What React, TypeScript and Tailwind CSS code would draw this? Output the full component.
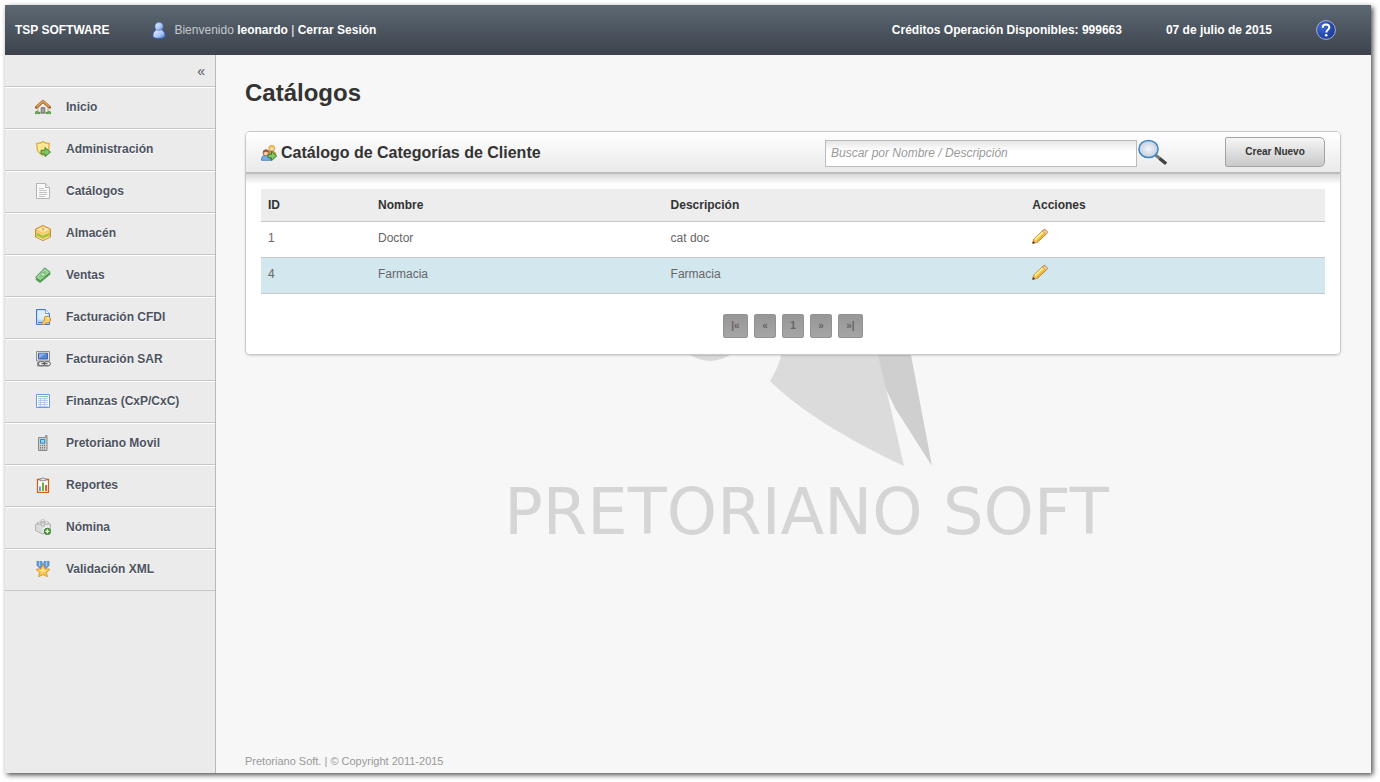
import { useState } from "react";
import type { ReactNode } from "react";
import { clsx } from "clsx";

function Icon({ children }: { children: ReactNode }) {
  return (
    <svg viewBox="0 0 16 16" className="w-4 h-4 shrink-0" aria-hidden="true">
      {children}
    </svg>
  );
}

const HomeIcon = () => (
  <Icon>
    <path d="M3 8.500 8 4l5 4.500V14H3z" fill="#f3efe8" stroke="#a89c8c" strokeWidth=".8" />
    <path d="M6.200 14V8.700h3.600V14z" fill="#a3a3a3" stroke="#5f5f5f" strokeWidth=".8" />
    <path d="M1.400 8.300 8 2.200l6.600 6.100" fill="none" stroke="#9a5a1e" strokeWidth="2.800" strokeLinejoin="round" strokeLinecap="round" />
    <path d="M1.600 8 8 2.100 14.400 8" fill="none" stroke="#dfa458" strokeWidth="1.600" strokeLinejoin="round" />
    <path d="M0 14.600c0-2 1.200-2.600 2.200-2.200 1 .2 1.600 1 2.800 1.200v1zM16 14.600c0-2-1.200-2.600-2.200-2.200-1 .2-1.600 1-2.800 1.200v1z" fill="#5fb04c" stroke="#34832a" strokeWidth=".6" />
  </Icon>
);

const ShieldIcon = () => (
  <Icon>
    <path d="M1.500 2.300C4 2.500 6 1.700 8 .5c2 1.200 4 2 6.500 1.800 0 2-.8 2.500-.5 4.500.2 4-3 6.200-6 7.700-3-1.500-6.200-3.700-6-7.700.3-2-.5-2.500-.5-4.500z" fill="#f5cf4d" stroke="#d39b26" strokeWidth=".9" />
    <path d="M3.300 3.900C5 3.900 6.700 3.200 8 2.500c1.300.7 3 1.400 4.700 1.400-.4 1-.5 2-.4 3.200.1 3-2.300 4.600-4.300 5.900-2-1.300-4.400-2.900-4.300-5.900.1-1.200 0-2.200-.4-3.200z" fill="#fbe38a" stroke="#fff7d0" strokeWidth=".9" />
    <path d="M6 9.300h4V6.600l5.500 4.500-5.500 4.500v-2.600H6z" fill="#84c464" stroke="#337a2c" strokeWidth=".9" />
  </Icon>
);

const PageIcon = () => (
  <Icon>
    <path d="M1.500.5h9l4 4v11h-13z" fill="#fafafa" stroke="#b5b5b5" />
    <path d="M10.500.5v4h4" fill="#e8e8e8" stroke="#b5b5b5" />
    <path d="M4 5.500h5M4 7.500h8M4 9.500h8M4 11.500h8M4 13.500h6" stroke="#c4c4c4" />
  </Icon>
);

const BoxIcon = () => (
  <Icon>
    <path d="M8 .5 15.500 4v8L8 15.600.5 12V4z" fill="#f1bf56" stroke="#c98422" strokeWidth=".9" />
    <path d="M8 1.500 14.500 4.500 8 7.700 1.500 4.500z" fill="#fde9b2" />
    <path d="M1.700 10.400 8 13.300l6.300-2.900V7.800L8 10.800 1.700 7.800z" fill="#9dcb3c" />
    <path d="M1.700 5.500 8 8.500l6.300-3v2L8 10.400 1.700 7.500z" fill="#f9d37c" />
    <path d="m5.500 2.600 2 .9v3l1.500-1V3" fill="#f0a83b" />
    <path d="M1.700 11.700 8 14.500l6.300-2.800" fill="none" stroke="#fae3a4" strokeWidth=".9" />
  </Icon>
);

const MoneyIcon = () => (
  <Icon>
    <path d="M.8 12.400 11.300 3.200l4 3.800L5 15.600z" fill="#62ad5f" stroke="#3d8a41" strokeWidth=".8" />
    <path d="M.6 10.300 9.800.8l5.400 4.500-9.800 8.400z" fill="#8bc985" stroke="#3d8a41" strokeWidth=".8" />
    <path d="m2.500 10.200 7.300-7.500 3.500 2.800-7.900 6.700z" fill="none" stroke="#c2e6b9" strokeWidth=".8" />
    <ellipse cx="8" cy="7.500" rx="2" ry="1.700" fill="#d5efcd" stroke="#5fa75c" strokeWidth=".8" />
  </Icon>
);

const PageKeyIcon = () => (
  <Icon>
    <path d="M1.500.5h9l4 4v11h-13z" fill="#b9d6f8" stroke="#3f7bc8" />
    <path d="M2.700 1.700h7.300l3.300 3.300v5.500H2.700z" fill="#dfedfd" />
    <path d="M10.500.5v4h4" fill="#fff" stroke="#6a9bdb" />
    <path d="M3 13.500h6" stroke="#3f7bc8" />
    <path d="M10 7.500h3.700L15.500 9v2.800L13.400 14h-2.200l-2.100 1.700H6.700l.2-2.300 3-2.500-.9-1.500z" fill="#f8ce62" stroke="#c08327" strokeWidth=".9" />
    <path d="M12.200 9.200h1.500" stroke="#fff3c4" strokeWidth="1.500" />
  </Icon>
);

const ComputerLinkIcon = () => (
  <Icon>
    <path d="M1.500.5h13V10h-13z" fill="#e2e2e2" stroke="#8e8e8e" />
    <path d="M3.500 2.300h9V8h-9z" fill="#5685d4" stroke="#3d62a5" />
    <path d="m4 7.500 7-5H4z" fill="#86adec" />
    <path d="M2.500 11.500h11V15h-11z" fill="#c5c5c5" stroke="#8b8b8b" />
    <rect x="3.500" y="10.700" width="6.200" height="4" rx="2" fill="#eee" stroke="#5b5b5b" />
    <rect x="9.200" y="10.700" width="6.200" height="4" rx="2" fill="#eee" stroke="#5b5b5b" />
    <path d="M6.500 12.700h6" stroke="#444" />
  </Icon>
);

const TableIcon = () => (
  <Icon>
    <path d="M1.500 1.500h13v13h-13z" fill="#fff" stroke="#6b9be0" />
    <path d="M3 3.500h10" stroke="#8cc78a" />
    <path d="M3 5.500h10v8H3z" fill="#eff5fe" />
    <path d="M3 5.500h10M3 7.500h10M3 9.500h10M3 11.500h10M3 13.500h10M5.500 5v9M9.500 5v9" stroke="#a9c3ee" strokeWidth=".8" />
  </Icon>
);

const PhoneIcon = () => (
  <Icon>
    <path d="M3.500 2.500h7.200v-2H12v15H3.500z" fill="#cdcdcd" stroke="#808080" strokeWidth=".9" />
    <path d="M5.500 4.500h4.200v3.700H5.500z" fill="#8fd6f9" stroke="#2789ca" />
    <path d="M5 10.500h1M7 10.500h1M9 10.500h1M5 12.500h1M7 12.500h1M5 14h1M7 14h1" stroke="#777" />
    <path d="M9 12.500h1" stroke="#e04040" />
    <path d="M9 14h1" stroke="#48a848" />
  </Icon>
);

const ReportIcon = () => (
  <Icon>
    <path d="M2.500 2.500h11v13h-11z" fill="#fff" stroke="#c0661d" strokeWidth="1.300" />
    <path d="M5 3.700v-2h2c.3-1.400 1.700-1.400 2 0h2v2z" fill="#e3e3e3" stroke="#8b8b8b" strokeWidth=".9" />
    <path d="M5 9.500v4.500" stroke="#4d9ad6" strokeWidth="1.800" />
    <path d="M8 5.500V14" stroke="#67b33a" strokeWidth="2" />
    <path d="M11 8v6" stroke="#dc4b3c" strokeWidth="1.800" />
  </Icon>
);

const BrickAddIcon = () => (
  <Icon>
    <path d="M.7 5.500 8 2.200l7.200 3V11l-7.500 4L.7 11.500z" fill="#eee" stroke="#989898" strokeWidth=".8" />
    <path d="M1 6 7.500 9v5.300L1 11.200z" fill="#dadada" />
    <path d="M2.500 3.800v1.700c.6.800 2.800.8 3.400 0V3.800M6.200 1.600v1.700c.6.800 2.800.8 3.400 0V1.600M6.200 5.500v1.700c.6.800 2.800.8 3.400 0V5.500M10 3.500v1.700c.6.800 2.800.8 3.400 0V3.500" fill="#e1e1e1" stroke="#a5a5a5" strokeWidth=".7" />
    <g fill="#fcfcfc" stroke="#a5a5a5" strokeWidth=".7">
      <ellipse cx="4.200" cy="3.800" rx="1.700" ry=".9" />
      <ellipse cx="7.900" cy="1.600" rx="1.700" ry=".9" />
      <ellipse cx="7.900" cy="5.500" rx="1.700" ry=".9" />
      <ellipse cx="11.700" cy="3.500" rx="1.700" ry=".9" />
    </g>
    <circle cx="12.400" cy="12.400" r="3.200" fill="#55a03f" stroke="#2f7425" strokeWidth=".8" />
    <path d="M12.400 10.500v3.800M10.500 12.400h3.800" stroke="#fff" strokeWidth="1.300" />
  </Icon>
);

const MedalIcon = () => (
  <Icon>
    <path d="M2 0h12v4.500L10.500 8h-5L2 4.500z" fill="#5f98d6" stroke="#3c76b5" strokeWidth=".6" />
    <path d="M4.500.3V5M11.500.3V5" stroke="#a9cdf0" strokeWidth="1.300" />
    <path d="M7 0h2l-1 3z" fill="#ebebeb" />
    <path d="m8 3.500 2 4.300 5 .5-3.600 3.200 1 4.200L8 13.500l-4.400 2.200 1-4.200L1 8.300l5-.5z" fill="#fccb4b" stroke="#d7902b" strokeWidth=".9" strokeLinejoin="round" />
    <path d="m8 5.800 1.300 2.900 2.900.4L8 11.500 3.800 9.100l2.900-.4z" fill="#fee08a" />
  </Icon>
);

const GroupIcon = () => (
  <Icon>
    <path d="M7 9c.3-2.500 1.500-3 3.500-3S14.500 7 15 9.500z" fill="#e5a336" stroke="#aa7120" strokeWidth=".7" />
    <circle cx="10.700" cy="3.300" r="2.900" fill="#f7d7ad" stroke="#bd852d" strokeWidth=".8" />
    <path d="M7.800 3.200C7.800-.6 13.700-.6 13.700 3.200 12 3 11 2 10.500 2 10 2.500 9 3.200 7.800 3.200z" fill="#eebb3e" />
    <path d="M.5 15.300c0-4 1.600-5 4.500-5s4.700 1 4.700 5z" fill="#77aeea" stroke="#3d73b8" strokeWidth=".8" />
    <circle cx="5" cy="7.900" r="3" fill="#f5cfaa" stroke="#8f4f2d" strokeWidth=".8" />
    <path d="M2 7.700c0-4.300 6-4.300 6 0C6.500 7.600 5.500 7 5 6.500c-.7.700-1.600 1.200-3 1.200z" fill="#9c5633" />
    <path d="M7 9.300h3.500V6.300l5.200 4.800-5.200 4.600v-2.900H7z" fill="#85c764" stroke="#2c742a" strokeWidth=".9" />
  </Icon>
);

const PencilIcon = () => (
  <Icon>
    <path d="m.7 14.300.9-4.100L10.500 1.600c1.200-1.300 2.500-1.100 3.600-.2 1.200 1 1.400 2.400.3 3.500L5.200 13.400z" fill="#f6d04a" stroke="#b87424" strokeWidth=".9" />
    <path d="m3 10.300 7.500-7.200" stroke="#fdf0a0" strokeWidth="1.600" />
    <path d="m4.900 12 7.500-7" stroke="#e2a530" />
    <path d="m10.700 2 3.300 3.200c1.500-1 1.400-2.700.2-3.600-1.100-1-2.400-.8-3.500.4z" fill="#f7d6b8" stroke="#c08350" strokeWidth=".7" />
    <path d="m.7 14.300.9-3.800 3.300 2.900z" fill="#e8b27c" />
    <path d="m.4 14.700.7-2.700 2 1.900z" fill="#433323" />
  </Icon>
);

function UserIcon() {
  return (
    <svg viewBox="0 0 14 18" className="w-3.5 h-[18px]" aria-hidden="true">
      <defs>
        <linearGradient id="user-fill" x1="0" y1="0" x2="1" y2="1">
          <stop offset="0" stopColor="#e8f1ff" />
          <stop offset=".6" stopColor="#a9c6f8" />
          <stop offset="1" stopColor="#3868cf" />
        </linearGradient>
      </defs>
      <path d="M4.500 8.500C1.700 10 .9 12.500.9 14.700c0 2 2.500 2.700 6.100 2.700s6.100-.7 6.100-2.700c0-2.200-.8-4.700-3.600-6.200z" fill="url(#user-fill)" stroke="#2d5bb8" strokeWidth=".9" />
      <circle cx="7" cy="5.500" r="4" fill="url(#user-fill)" stroke="#668bd2" strokeWidth=".7" />
    </svg>
  );
}

function HelpIcon() {
  return (
    <svg viewBox="0 0 20 20" className="w-5 h-5" aria-hidden="true">
      <defs>
        <radialGradient id="help-fill" cx=".3" cy=".3" r=".9">
          <stop offset="0" stopColor="#3f68d6" />
          <stop offset="1" stopColor="#14308c" />
        </radialGradient>
      </defs>
      <circle cx="10" cy="10" r="9.400" fill="url(#help-fill)" stroke="#aab3c4" />
      <path d="M6.700 7.800C6.700 5.600 8.100 4.500 10 4.500s3.300 1.100 3.300 2.900c0 2.400-3 2.300-3 5" fill="none" stroke="#fff" strokeWidth="2" />
      <circle cx="10.200" cy="15.200" r="1.300" fill="#fff" />
    </svg>
  );
}

function SearchIcon() {
  return (
    <svg viewBox="0 0 30 27" className="w-[30px] h-[27px]" aria-hidden="true">
      <defs>
        <radialGradient id="lens-fill">
          <stop offset="0" stopColor="#f3f6fa" />
          <stop offset="1" stopColor="#c3cddc" />
        </radialGradient>
      </defs>
      <path d="m17.500 16 9.700 8" stroke="#777" strokeWidth="3" />
      <path d="m21.500 19.500 6.700 5.300" stroke="#444" strokeWidth="3" />
      <ellipse cx="10.500" cy="10" rx="9.600" ry="8.600" fill="url(#lens-fill)" stroke="#3d87c5" strokeWidth="1.500" />
    </svg>
  );
}

const menu = [
  { label: "Inicio", icon: HomeIcon },
  { label: "Administración", icon: ShieldIcon },
  { label: "Catálogos", icon: PageIcon },
  { label: "Almacén", icon: BoxIcon },
  { label: "Ventas", icon: MoneyIcon },
  { label: "Facturación CFDI", icon: PageKeyIcon },
  { label: "Facturación SAR", icon: ComputerLinkIcon },
  { label: "Finanzas (CxP/CxC)", icon: TableIcon },
  { label: "Pretoriano Movil", icon: PhoneIcon },
  { label: "Reportes", icon: ReportIcon },
  { label: "Nómina", icon: BrickAddIcon },
  { label: "Validación XML", icon: MedalIcon },
];

const rows = [
  { id: 1, nombre: "Doctor", descripcion: "cat doc" },
  { id: 4, nombre: "Farmacia", descripcion: "Farmacia" },
];

const pages = ["|«", "«", "1", "»", "»|"];

function Header() {
  return (
    <header className="flex items-center h-[50px] pl-2.5 pr-[35px] bg-linear-to-b from-[#5d6872] to-[#3c434d] font-bold text-white">
      <span>TSP SOFTWARE</span>
      <div className="flex items-center gap-2 ml-[43px]">
        <UserIcon />
        <p>
          <span className="font-normal text-[#c4c8cc]">Bienvenido</span> <a href="#perfil">leonardo</a>{" "}
          <span className="font-normal">|</span> <a href="#salir">Cerrar Sesión</a>
        </p>
      </div>
      <span className="ml-auto">Créditos Operación Disponibles: 999663</span>
      <span className="ml-11">07 de julio de 2015</span>
      <a href="#ayuda" aria-label="Ayuda" className="ml-11">
        <HelpIcon />
      </a>
    </header>
  );
}

function Sidebar() {
  return (
    <aside className="w-[211px] shrink-0 bg-[#ebebeb] border-r border-[#b8b8b8] font-bold text-[#4c5260] [text-shadow:0_1px_0_#fff]">
      <div className="flex justify-end items-center h-8 pr-2.5 border-b border-[#c6c6c6]">
        <button aria-label="Contraer menú" className="text-sm font-normal">«</button>
      </div>
      <nav>
        {menu.map(({ label, icon: MenuIcon }) => (
          <a
            key={label}
            href="#"
            className="flex items-center gap-[15px] h-[42px] pb-0.5 pl-[30px] border-t border-t-white border-b border-b-[#c6c6c6]"
          >
            <MenuIcon />
            {label}
          </a>
        ))}
      </nav>
    </aside>
  );
}

// Company mark behind the content
function Watermark() {
  return (
    <div aria-hidden="true" className="absolute inset-x-0 top-[245px] pl-[26px] flex flex-col items-center select-none">
      <svg viewBox="0 0 640 180" className="w-[640px] h-[180px]">
        <ellipse cx="223" cy="33" rx="32" ry="28" fill="#dadada" />
        <path d="M296 0c5 40-1 62-13 81 28 28 76 58 134 85L399 88 391 0z" fill="#dbdbdb" />
        <path d="M391 0v55l8 34 9 19 37 58-21-111V0z" fill="#cfcfcf" />
      </svg>
      <p className="text-[64px] leading-[64px] text-[#d5d5d5] font-['DejaVu_Sans',sans-serif] whitespace-nowrap">
        PRETORIANO SOFT
      </p>
    </div>
  );
}

function CategoryCard() {
  const [query, setQuery] = useState("");

  return (
    <section className="relative bg-white border border-[#c9c9cb] rounded-[5px] shadow-[0_1px_2px_rgba(0,0,0,0.15)] overflow-hidden">
      <div className="flex items-center h-[42px] px-[15px] bg-linear-to-b from-white to-[#eaeaea] border-b-2 border-[#bcbcbc]">
        <h2 className="flex items-center gap-1 mr-auto pt-0.5 text-base leading-5 font-bold text-[#333]">
          <GroupIcon />
          Catálogo de Categorías de Cliente
        </h2>
        <input
          type="text"
          aria-label="Buscar por Nombre / Descripción"
          value={query}
          onChange={(e) => setQuery(e.target.value)}
          placeholder="Buscar por Nombre / Descripción"
          className="w-[312px] h-[27px] mt-0.5 px-[5px] bg-linear-to-b from-[#e6e6e6] to-white to-40% border border-[#bbb] text-[#555] placeholder:italic placeholder:text-[#999]"
        />
        <button aria-label="Buscar" className="ml-px">
          <SearchIcon />
        </button>
        <button className="w-[100px] h-[30px] ml-[57px] rounded-r-[5px] rounded-l-xs border border-[#a3a3a3] bg-linear-to-b from-[#f6f6f6] to-[#c9c9c9] text-[10px] font-bold text-[#333]">
          Crear Nuevo
        </button>
      </div>

      <div className="px-[15px] pt-[15px] pb-4 bg-[linear-gradient(#d8d8d8,#ffffff_10px)]">
        <table className="w-full table-fixed border-separate border-spacing-0 text-left text-[#666]">
          <colgroup>
            <col className="w-[110px]" />
            <col className="w-[27.5%]" />
            <col className="w-[34%]" />
            <col />
          </colgroup>
          <thead className="bg-[#ededed] text-[#333]">
            <tr>
              {["ID", "Nombre", "Descripción", "Acciones"].map((title) => (
                <th key={title} className="h-[33px] px-[7px] border-b border-[#c8c8cc] font-bold">
                  {title}
                </th>
              ))}
            </tr>
          </thead>
          <tbody>
            {rows.map((row, i) => (
              <tr key={row.id} className={clsx("[&>td]:h-9 [&>td]:px-[7px] [&>td]:pb-1 [&>td]:border-b [&>td]:border-[#c8c8cc]", i % 2 ? "bg-[#d3e7ef]" : "bg-white")}>
                <td>{row.id}</td>
                <td>{row.nombre}</td>
                <td>{row.descripcion}</td>
                <td>
                  <button aria-label={`Editar ${row.nombre}`} className="block pb-0.5">
                    <PencilIcon />
                  </button>
                </td>
              </tr>
            ))}
          </tbody>
        </table>

        <div className="flex justify-center gap-1.5 mt-5">
          {pages.map((page) => (
            <button
              key={page}
              className={clsx(
                "h-6 rounded-xs border border-[#929292] bg-linear-to-b from-[#979797] to-[#a5a5a5] text-[10px] font-bold text-[#686264]",
                page.length > 1 ? "w-[25px]" : "w-[22px]"
              )}
            >
              {page}
            </button>
          ))}
        </div>
      </div>
    </section>
  );
}

export default function App() {
  return (
    <div className="flex min-h-screen bg-white pt-[5px] pl-[5px] pr-[9px] pb-[9px] text-xs leading-4 font-['Liberation_Sans',Arial,sans-serif]">
      <div className="flex-1 flex flex-col shadow-[2px_2px_5px_rgba(0,0,0,0.7)]">
        <Header />
        <div className="flex-1 flex">
          <Sidebar />
          <main className="relative flex-1 flex flex-col pl-[29px] pr-[30px] pt-[22px] pb-1 bg-[#f7f7f7]">
            <Watermark />
            <h1 className="relative mb-[22px] text-2xl leading-8 font-bold text-[#333]">Catálogos</h1>
            <CategoryCard />
            <footer className="relative mt-auto text-[11px] text-[#999]">
              Pretoriano Soft. | © Copyright 2011-2015
            </footer>
          </main>
        </div>
      </div>
    </div>
  );
}
